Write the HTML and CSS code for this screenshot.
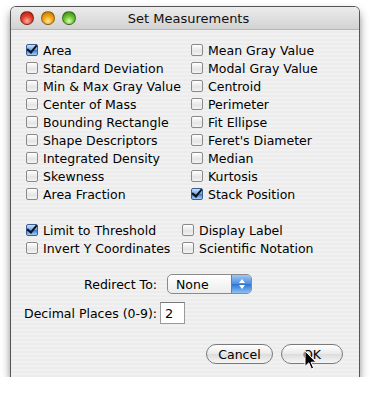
FILE: index.html
```html
<!DOCTYPE html>
<html>
<head>
<meta charset="utf-8">
<link rel="stylesheet" href="styles.css">
</head>
<body>
<div class="window">
  <div class="titlebar">
    <div class="lights">
      <span class="light red"></span>
      <span class="light yellow"></span>
      <span class="light green"></span>
    </div>
    <div class="title">Set Measurements</div>
  </div>
  <div class="content">
    <div class="grid main">
      <label class="cb"><span class="box checked"></span>Area</label>
      <label class="cb"><span class="box"></span>Mean Gray Value</label>
      <label class="cb"><span class="box"></span>Standard Deviation</label>
      <label class="cb"><span class="box"></span>Modal Gray Value</label>
      <label class="cb"><span class="box"></span>Min &amp; Max Gray Value</label>
      <label class="cb"><span class="box"></span>Centroid</label>
      <label class="cb"><span class="box"></span>Center of Mass</label>
      <label class="cb"><span class="box"></span>Perimeter</label>
      <label class="cb"><span class="box"></span>Bounding Rectangle</label>
      <label class="cb"><span class="box"></span>Fit Ellipse</label>
      <label class="cb"><span class="box"></span>Shape Descriptors</label>
      <label class="cb"><span class="box"></span>Feret's Diameter</label>
      <label class="cb"><span class="box"></span>Integrated Density</label>
      <label class="cb"><span class="box"></span>Median</label>
      <label class="cb"><span class="box"></span>Skewness</label>
      <label class="cb"><span class="box"></span>Kurtosis</label>
      <label class="cb"><span class="box"></span>Area Fraction</label>
      <label class="cb"><span class="box checked"></span>Stack Position</label>
    </div>
    <div class="grid opts">
      <label class="cb"><span class="box checked"></span>Limit to Threshold</label>
      <label class="cb"><span class="box"></span>Display Label</label>
      <label class="cb"><span class="box"></span>Invert Y Coordinates</label>
      <label class="cb"><span class="box"></span>Scientific Notation</label>
    </div>
    <div class="row redirect">
      <span class="lbl">Redirect To:</span>
      <div class="popup"><span class="pv">None</span><span class="arrows"><svg width="8" height="12" viewBox="0 0 8 12"><path d="M4 1 L7 5 L1 5 Z M4 11 L7 7 L1 7 Z" fill="#fff"/></svg></span></div>
    </div>
    <div class="row decimal">
      <span class="lbl">Decimal Places (0-9):</span>
      <div class="field">2</div>
    </div>
    <div class="buttons">
      <div class="btn">Cancel</div>
      <div class="btn ok">OK</div>
    </div>
  </div>
  <svg class="cursor" width="13" height="21" viewBox="0 0 13 21"><path d="M1 1 L1 16.5 L4.8 12.8 L7.4 19 L9.6 18 L7.1 12.2 L12 12.2 Z" fill="#000" stroke="#fff" stroke-width="1"/></svg>
</div>
</body>
</html>
```
FILE: styles.css
```css
html, body {
  margin: 0;
  padding: 0;
  background: #fff;
}
body {
  padding: 7px 0 0 11px;
  font-family: "DejaVu Sans", "Liberation Sans", sans-serif;
  font-size: 12.5px;
  color: #000;
}
.window {
  position: relative;
  width: 348px;
  height: 370px;
  border-radius: 5px 5px 0 0;
  box-shadow: 0 0 0 1px #555, 0 5px 10px rgba(0,0,0,0.55);
  background: repeating-linear-gradient(#ececec 0, #ececec 2px, #f1f1f1 2px, #f1f1f1 4px);
}
.titlebar {
  height: 23px;
  border-radius: 5px 5px 0 0;
  background: linear-gradient(#ececec, #d2d2d2);
  border-bottom: 1px solid #b5b5b5;
  display: flex;
  align-items: center;
  box-sizing: border-box;
}
.lights {
  display: flex;
  gap: 7px;
  padding-left: 9px;
}
.light {
  width: 14px;
  height: 14px;
  border-radius: 50%;
  box-sizing: border-box;
  border: 1px solid rgba(0,0,0,0.35);
}
.red { background: radial-gradient(circle at 50% 75%, #ffb0a8 0, #e2432f 45%, #a8180c 100%); }
.yellow { background: radial-gradient(circle at 50% 75%, #ffe6a0 0, #f0a414 45%, #b06a00 100%); }
.green { background: radial-gradient(circle at 50% 75%, #d6ffb0 0, #6dc232 45%, #2f7d0b 100%); }
.title {
  flex: 1;
  text-align: center;
  font-size: 13px;
  margin-right: 58px;
  color: #111;
}
.content {
  padding: 11px 0 0 15px;
}
.grid {
  display: grid;
  grid-auto-rows: 18px;
}
.main {
  grid-template-columns: 165px 150px;
}
.opts {
  margin-top: 18px;
  grid-template-columns: 156px 160px;
}
.cb {
  display: flex;
  align-items: center;
  white-space: nowrap;
}
.box {
  width: 12px;
  height: 12px;
  box-sizing: border-box;
  border: 1px solid #8a8a8a;
  border-radius: 2px;
  background: linear-gradient(#ffffff, #e4e4e4 60%, #f4f4f4);
  margin-right: 5px;
  position: relative;
  flex: none;
}
.box.checked {
  border-color: #3a5d94;
  background: linear-gradient(#c9e1fb, #6fa6e6 50%, #3f7fd3 55%, #a7d0f8);
}
.box.checked::after {
  content: "";
  position: absolute;
  left: 2px;
  top: -2px;
  width: 4px;
  height: 8px;
  border-right: 2px solid #111;
  border-bottom: 2px solid #111;
  transform: rotate(40deg);
}
.row {
  display: flex;
  align-items: center;
}
.redirect {
  margin-top: 17px;
  height: 20px;
}
.redirect .lbl {
  width: 131px;
  text-align: right;
  margin-right: 10px;
}
.popup {
  width: 85px;
  height: 20px;
  box-sizing: border-box;
  border: 1px solid #8a8a8a;
  border-radius: 5px;
  background: linear-gradient(#ffffff, #ececec);
  display: flex;
  align-items: center;
  overflow: hidden;
}
.pv {
  flex: 1;
  padding-left: 8px;
}
.arrows {
  width: 19px;
  height: 100%;
  background: linear-gradient(#9ec8f5, #4d8ee0 50%, #2f74d2 52%, #8bc1f7);
  border-left: 1px solid #5d7fb0;
  display: flex;
  align-items: center;
  justify-content: center;
}
.decimal {
  margin-top: 8px;
  height: 22px;
}
.decimal .lbl {
  margin-left: -2px;
  margin-right: 3px;
}
.field {
  width: 25px;
  height: 22px;
  box-sizing: border-box;
  border: 1px solid #9a9a9a;
  border-top-color: #777;
  background: #fff;
  padding: 3px 0 0 4px;
  font-size: 13px;
}
.buttons {
  display: flex;
  justify-content: flex-end;
  gap: 8px;
  margin-top: 20px;
  padding-right: 16px;
}
.btn {
  height: 20px;
  box-sizing: border-box;
  border: 1px solid #7a7a7a;
  border-radius: 10px;
  background: linear-gradient(#ffffff, #e9e9e9 50%, #dcdcdc 52%, #f6f6f6);
  display: flex;
  align-items: center;
  justify-content: center;
  width: 67px;
  font-size: 12.5px;
}
.btn.ok {
  width: 62px;
}
.cursor {
  position: absolute;
  left: 293px;
  top: 343px;
}
```
